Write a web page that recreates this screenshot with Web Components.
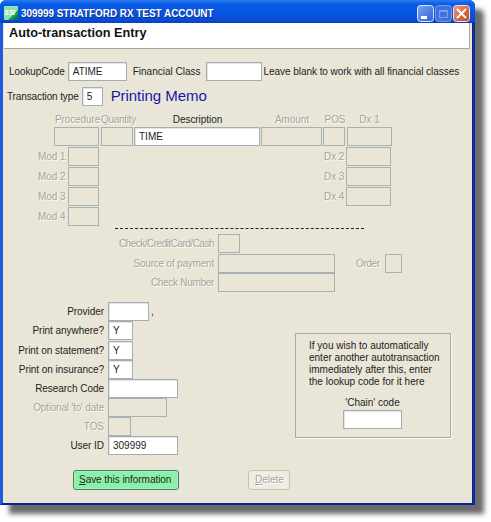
<!DOCTYPE html>
<html>
<head>
<meta charset="utf-8">
<title>Auto-transaction Entry</title>
<style>
html, body { margin: 0; padding: 0; background: #fff; }
body { width: 491px; height: 522px; overflow: hidden; font: 10px "Liberation Sans", Arial, sans-serif; color: #1c1c1c; }
</style>
</head>
<body>
<template id="win-tpl">
<style>
:host { display: block; width: 475px; height: 505px; position: relative; box-sizing: border-box; }
.frame { height: 100%; display: flex; flex-direction: column; box-sizing: border-box; border-radius: 6px 6px 0 0; background: #0c3fc4;
  border-left: 3px solid #1f5ae0; border-right: 3px solid #0a2a9c; border-bottom: 2px solid #0a2390;
  box-shadow: 9px 9px 5px rgba(70,70,70,.8); }
.title { height: 23px; flex: none; margin: 0 -3px; padding: 3px 4px 0 4px; box-sizing: border-box; display: flex; align-items: center; gap: 3px; border-radius: 6px 6px 0 0;
  background: linear-gradient(#2a7cf0 0, #0a5ce6 4px, #0654e0 14px, #0a4bd0 20px, #0c3fc0 23px); color: #fff; }
.title span { font: bold 10px "Liberation Sans", Arial, sans-serif; letter-spacing: -.06px; text-shadow: 1px 1px 0 #0a2f90; flex: 1; white-space: nowrap; }
.btns { display: flex; gap: 1px; margin-right: 1px; }
.body { flex: 1; background: #e9e6d8; min-height: 0; }
svg { display: block; }
</style>
<div class="frame">
  <div class="title">
    <svg width="14" height="14" viewBox="0 0 14 14">
      <rect width="14" height="14" fill="#149a62"/>
      <path d="M0 0h14v4L4 14H0z" fill="#8fe0ac"/>
      <path d="M8 14l6-6v6z" fill="#0c7a4e"/>
      <text x="0" y="9" font-family="Liberation Sans, sans-serif" font-size="7" font-weight="bold" font-style="italic" fill="#fff">SSI</text>
    </svg>
    <span><slot name="title"></slot></span>
    <div class="btns">
      <svg width="17" height="17" viewBox="0 0 17 17">
        <defs><linearGradient id="bb" x1="0" y1="0" x2="1" y2="1"><stop offset="0" stop-color="#7fa6f4"/><stop offset="1" stop-color="#2a5fd8"/></linearGradient></defs>
        <rect x=".5" y=".5" width="16" height="16" rx="3" fill="url(#bb)" stroke="#dfe8fb"/>
        <rect x="4" y="11" width="6" height="3" fill="#fff"/>
      </svg>
      <svg width="17" height="17" viewBox="0 0 17 17">
        <rect x=".5" y=".5" width="16" height="16" rx="3" fill="#3f72e0" stroke="#a9c0f2" stroke-opacity=".6"/>
        <path d="M4.500 5.500h8v7h-8zM4.500 6.500h8" fill="none" stroke="#7f9fe6"/>
      </svg>
      <svg width="17" height="17" viewBox="0 0 17 17">
        <defs><linearGradient id="rb" x1="0" y1="0" x2="1" y2="1"><stop offset="0" stop-color="#ec9a7c"/><stop offset="1" stop-color="#c8401c"/></linearGradient></defs>
        <rect x=".5" y=".5" width="16" height="16" rx="3" fill="url(#rb)" stroke="#f3e3dc"/>
        <path d="M4.500 4.500l8 8M12.500 4.500l-8 8" stroke="#fff" stroke-width="2" stroke-linecap="round"/>
      </svg>
    </div>
  </div>
  <div class="body"><slot></slot></div>
</div>
</template>

<template id="fld-tpl">
<style>
:host { display: block; box-sizing: border-box; height: 19px; width: var(--w, 60px); flex: none; background: #fff; border: 1px solid #a4adb3; box-shadow: inset 1px 1px 0 #e4e4e4; padding: 0 0 0 4px; line-height: 18px; text-align: left; white-space: nowrap; overflow: hidden; color: #222; }
:host([off]) { background: #e9e6d8; box-shadow: none; border-color: #a7b0b3; }
</style>
<slot></slot>
</template>

<template id="lbl-tpl">
<style>
:host { display: block; flex: none; width: var(--w, auto); text-align: var(--a, right); white-space: nowrap; color: #232323; line-height: 19px; letter-spacing: var(--ls, -.05px); }
:host([off]) { color: #a5a59d; text-shadow: 1px 1px 0 #fbfbf5; }
</style>
<slot></slot>
</template>

<template id="form-tpl">
<style>
:host { display: block; height: 100%; }
.head { height: 26px; box-sizing: border-box; margin: 0 2px 0 1px; background: #fff; border-bottom: 1px solid #a7a7a0; border-right: 1px solid #a7a7a0; padding: 2px 0 0 5px; font: bold 12.700px/17px "Liberation Sans", Arial, sans-serif; color: #111; }
.main { padding: 13px 0 0 0; }
.row { display: flex; align-items: flex-start; height: 19px; white-space: nowrap; }
.r1 { padding-left: 6px; gap: 3px; }
.r2 { padding-left: 4px; margin-top: 6px; gap: 3px; }
.memo { color: #1616ac; font-size: 15px; line-height: 18px; margin-left: 5px; letter-spacing: -.05px; }
.grid { display: grid; margin: 4px 0 0 51px; grid-template-columns: 47px 33px 127px 62px 24px 45px; grid-template-rows: 17px 19px; text-align: center; }
.grid x-label { --a: center; line-height: 20px; }
.mods { display: flex; justify-content: space-between; margin: 1px 0 0 35px; width: 353px; }
.mc { display: grid; grid-template-columns: 26px 31px; column-gap: 4px; grid-auto-rows: 19px; row-gap: 1px; }
.mc.r { grid-template-columns: 20px 45px; column-gap: 2px; }
.dash { margin: 2px 0 0 112px; width: 249px; border-top: 1px dashed #222; height: 0; }
.pay { display: grid; margin: 5px 0 0 0; grid-template-columns: 211px 22px; grid-template-rows: 20px 19px 19px; column-gap: 4px; }
.wide { --w: 117px; }
.lower { display: flex; margin-top: 10px; }
.left { display: grid; grid-template-columns: 101px auto; grid-template-rows: 19px 20px; column-gap: 4px; grid-auto-rows: 19px; justify-items: start; width: 292px; flex: none; align-content: start; }
.left x-label { justify-self: stretch; }
.inl { display: flex; gap: 3px; }
.box { box-sizing: border-box; width: 156px; height: 105px; margin-top: 31px; border: 1px solid #a9a99c; box-shadow: 1px 1px 0 #fbfbf5; padding: 6px 14px 0 13px; line-height: 12px; white-space: nowrap; }
.chain { margin-top: 9px; display: flex; flex-direction: column; align-items: center; }
.chain div { height: 13px; }
.actions { display: flex; margin: 15px 0 0 70px; gap: 69px; }
</style>
<div class="head">Auto-transaction Entry</div>
<div class="main">
  <div class="row r1">
    <x-label style="--ls:-.1px">LookupCode</x-label><x-field style="--w:59px">ATIME</x-field>
    <x-label style="margin-left:3px;--ls:0">Financial Class</x-label><x-field style="--w:56px;margin-left:2px"></x-field>
    <x-label style="margin-left:-1px">Leave blank to work with all financial classes</x-label>
  </div>
  <div class="row r2">
    <x-label style="--ls:-.12px">Transaction type</x-label><x-field style="--w:21px">5</x-field>
    <span class="memo">Printing Memo</span>
  </div>
  <div class="grid">
    <x-label off style="--ls:-.1px">Procedure</x-label><x-label off style="--a:left;--ls:-.3px">Quantity</x-label><x-label>Description</x-label><x-label off>Amount</x-label><x-label off>POS</x-label><x-label off>Dx 1</x-label>
    <x-field off style="--w:45px"></x-field><x-field off style="--w:32px"></x-field><x-field style="--w:126px">TIME</x-field><x-field off style="--w:61px"></x-field><x-field off style="--w:22px"></x-field><x-field off style="--w:45px"></x-field>
  </div>
  <div class="mods">
    <div class="mc">
      <x-label off>Mod 1</x-label><x-field off style="--w:31px"></x-field>
      <x-label off>Mod 2</x-label><x-field off style="--w:31px"></x-field>
      <x-label off>Mod 3</x-label><x-field off style="--w:31px"></x-field>
      <x-label off>Mod 4</x-label><x-field off style="--w:31px"></x-field>
    </div>
    <div class="mc r">
      <x-label off>Dx 2</x-label><x-field off style="--w:45px"></x-field>
      <x-label off>Dx 3</x-label><x-field off style="--w:45px"></x-field>
      <x-label off>Dx 4</x-label><x-field off style="--w:45px"></x-field>
    </div>
  </div>
  <div class="dash"></div>
  <div class="pay">
    <x-label off style="--ls:-.5px">Check/CreditCard/Cash</x-label><x-field off style="--w:22px"></x-field>
    <x-label off style="--ls:-.2px">Source of payment</x-label>
    <div class="inl"><x-field off class="wide"></x-field><x-label off style="margin-left:18px;--ls:-.4px">Order</x-label><x-field off style="--w:17px;margin-left:2px"></x-field></div>
    <x-label off style="--ls:-.3px">Check Number</x-label><x-field off class="wide"></x-field>
  </div>
  <div class="lower">
    <div class="left">
      <x-label>Provider</x-label><div class="inl" style="gap:2px"><x-field style="--w:41px"></x-field><x-label>,</x-label></div>
      <x-label>Print anywhere?</x-label><x-field style="--w:25px">Y</x-field>
      <x-label>Print on statement?</x-label><x-field style="--w:25px">Y</x-field>
      <x-label>Print on insurance?</x-label><x-field style="--w:25px">Y</x-field>
      <x-label>Research Code</x-label><x-field style="--w:70px"></x-field>
      <x-label off style="--ls:-.2px">Optional 'to' date</x-label><x-field off style="--w:59px"></x-field>
      <x-label off>TOS</x-label><x-field off style="--w:23px"></x-field>
      <x-label>User ID</x-label><x-field style="--w:70px">309999</x-field>
    </div>
    <div class="box">
      If you wish to automatically<br>enter another autotransaction<br>immediately after this, enter<br>the lookup code for it here
      <div class="chain"><div>'Chain' code</div><x-field style="--w:59px"></x-field></div>
    </div>
  </div>
  <div class="actions">
    <x-button primary><u>S</u>ave this information</x-button>
    <x-button off><u>D</u>elete</x-button>
  </div>
</div>
</template>

<template id="btn-tpl">
<style>
:host { display: block; box-sizing: border-box; height: 20px; padding: 0 6px; line-height: 18px; border: 1px solid #c4c4b8; border-radius: 3px; color: #a5a59d; background: #efede2; text-shadow: 1px 1px 0 #fff; white-space: nowrap; width: 42px; }
:host([primary]) { width: 106px; border: 1px solid #3f7f6c; background: #8df0a8; color: #1c2a20; text-shadow: none; box-shadow: inset 0 0 0 1px #a4f4bb; padding: 0 4px 0 5px; letter-spacing: -.05px; }
</style>
<slot></slot>
</template>

<script>
class AppWindow extends HTMLElement {
  constructor() {
    super();
    this.attachShadow({ mode: "open" }).append(document.getElementById("win-tpl").content.cloneNode(true));
  }
}
class XField extends HTMLElement {
  constructor() {
    super();
    this.attachShadow({ mode: "open" }).append(document.getElementById("fld-tpl").content.cloneNode(true));
  }
}
class XLabel extends HTMLElement {
  constructor() {
    super();
    this.attachShadow({ mode: "open" }).append(document.getElementById("lbl-tpl").content.cloneNode(true));
  }
}
class XButton extends HTMLElement {
  constructor() {
    super();
    this.attachShadow({ mode: "open" }).append(document.getElementById("btn-tpl").content.cloneNode(true));
  }
}
class TransactionForm extends HTMLElement {
  constructor() {
    super();
    this.attachShadow({ mode: "open" }).append(document.getElementById("form-tpl").content.cloneNode(true));
  }
}
customElements.define("app-window", AppWindow);
customElements.define("x-field", XField);
customElements.define("x-label", XLabel);
customElements.define("x-button", XButton);
customElements.define("transaction-form", TransactionForm);
</script>

<app-window>
  <span slot="title">309999 STRATFORD RX TEST ACCOUNT</span>
  <transaction-form></transaction-form>
</app-window>
</body>
</html>
